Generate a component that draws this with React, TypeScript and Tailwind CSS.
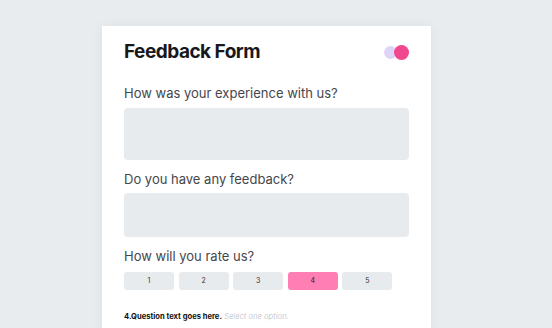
export default function App() {
  const ratings = [1, 2, 3, 4, 5];
  const selected = 4;

  return (
    <main className="h-[328px] w-[552px] overflow-hidden bg-[#e9ecef] font-['Inter',sans-serif]">
      <div className="ml-[102px] mt-[26px] h-[320px] w-[329px] bg-white px-[22px] pt-[13px] shadow-[0_0_12px_rgba(0,0,0,0.05)]">
        {/* Header */}
        <div className="flex h-[26px] items-center justify-between pr-[1px]">
          <h1 className="text-[19px] font-bold tracking-[-0.5px] text-[#18181b]">
            Feedback Form
          </h1>
          <div className="relative mr-[-1px] h-[15px] w-[25px]">
            <span className="absolute left-0 top-[1px] h-[13px] w-[13px] rounded-full bg-[#ded5f6]" />
            <span className="absolute right-0 top-0 h-[15px] w-[15px] rounded-full bg-[#f0478f]" />
          </div>
        </div>

        <p className="mt-[20px] text-[13px] leading-[16px] text-[#45464b]">
          How was your experience with us?
        </p>
        <div className="mt-[7px] h-[52px] rounded-[4px] bg-[#e8ebee]" />

        <p className="mt-[11px] text-[13px] leading-[16px] text-[#45464b]">
          Do you have any feedback?
        </p>
        <div className="mt-[6px] h-[44px] rounded-[4px] bg-[#e8ebee]" />

        <p className="mt-[11px] text-[13px] leading-[16px] text-[#45464b]">
          How will you rate us?
        </p>
        <div className="mt-[8px] flex gap-[4.6px]">
          {ratings.map((r) => (
            <div
              key={r}
              className={`flex h-[18px] w-[50px] items-center justify-center rounded-[3px] text-[7px] ${
                r === selected
                  ? "bg-[#ff7fb5] text-[#3a1020]"
                  : "bg-[#e8ebee] text-[#333]"
              }`}
            >
              {r}
            </div>
          ))}
        </div>

        <p className="mt-[22px] text-[7.6px] leading-[10px]">
          <span className="font-bold text-[#111]">4.Question text goes here.</span>{" "}
          <span className="italic text-[#c8cbd0]">Select one option.</span>
        </p>
      </div>
    </main>
  );
}
